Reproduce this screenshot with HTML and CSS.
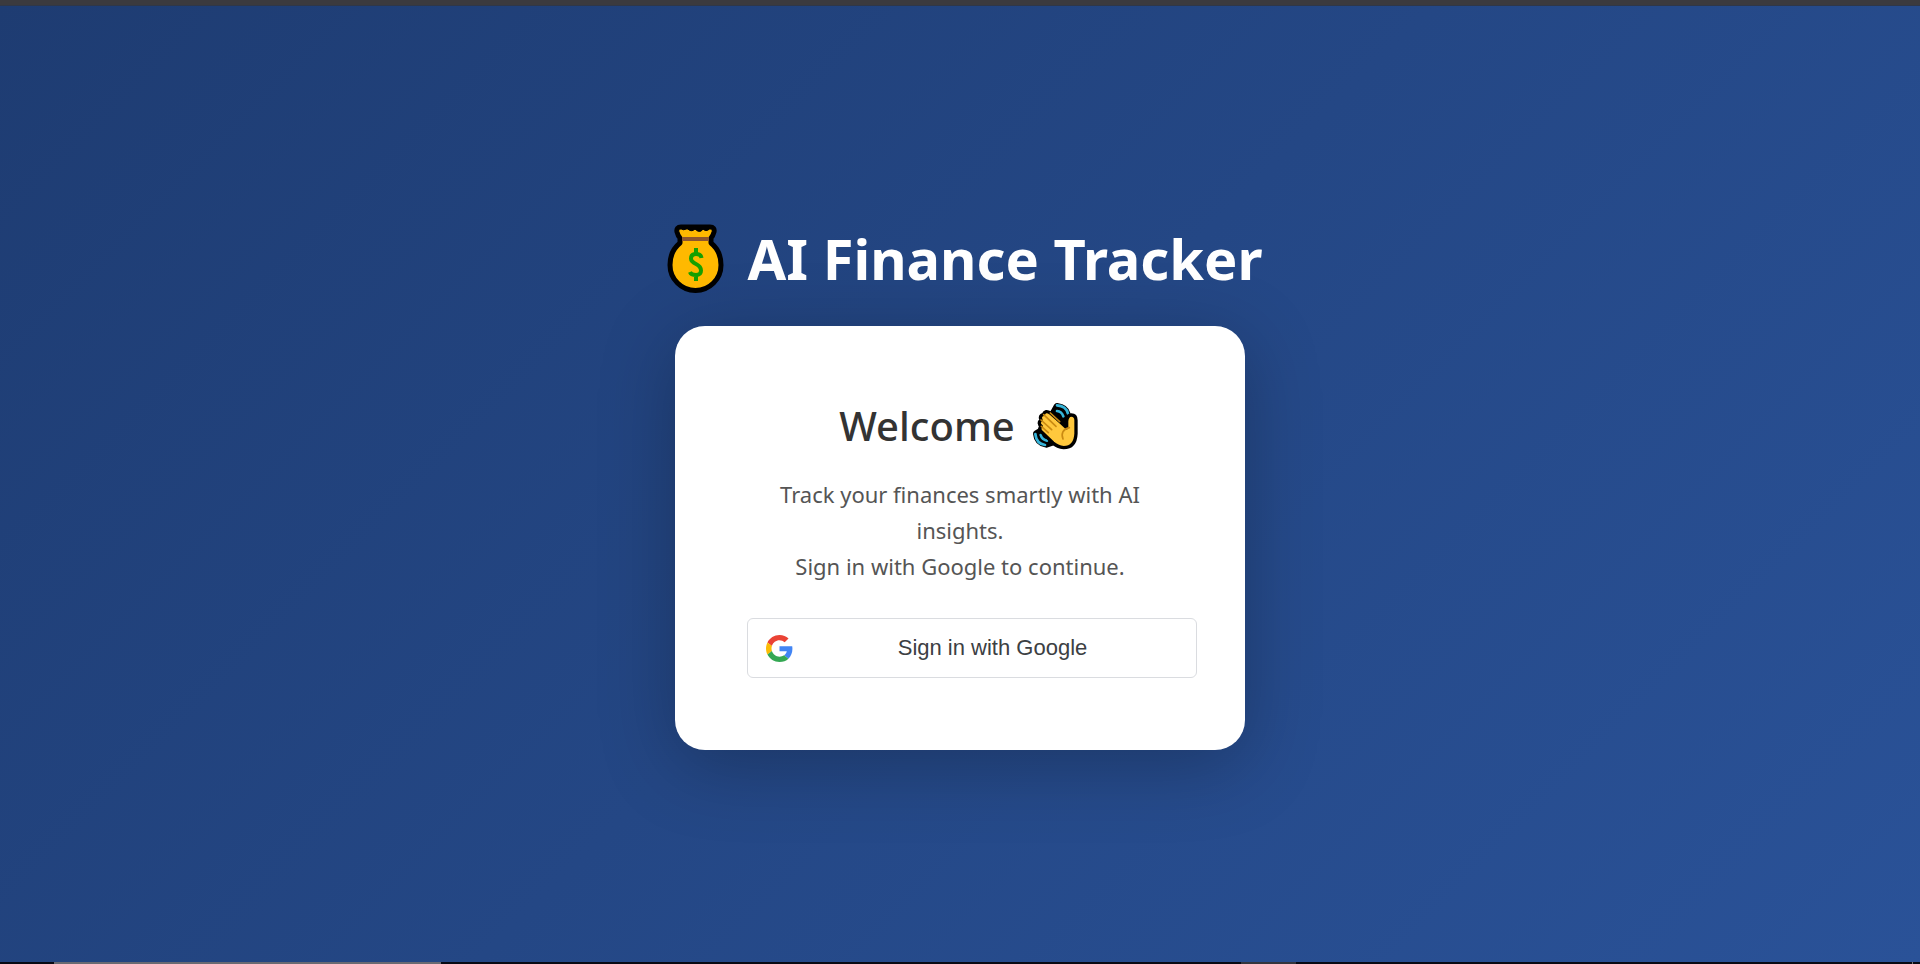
FILE: index.html
```html
<!DOCTYPE html>
<html lang="en">
<head>
<meta charset="utf-8">
<meta name="viewport" content="width=device-width, initial-scale=1">
<title>AI Finance Tracker</title>
<link rel="stylesheet" href="styles.css">
</head>
<body>
<div class="top-edge"></div>
<main class="page">
  <h1 class="title">
    <svg class="bag" viewBox="0 0 80 76" aria-hidden="true">
      <path d="M23 7H52Q57 7 56 12Q55 16 53 18V23Q63 31 63 45A25.500 25.500 0 0 1 12 45Q12 31 22 23V18Q20 16 19 12Q18 7 23 7Z" fill="#ffb900" stroke="#000" stroke-width="5" stroke-linejoin="round"/>
      <path d="M22 7q3 5 7 1q4 5 8 1q5 5 8 0q4 4 8-2z" fill="#000" stroke="#000"/>
      <path d="M24 19H51" stroke="#8e562e" stroke-width="4"/>
      <path d="M43.500 38Q43 34 38 34Q33 34 33 38.500Q33 41.500 38 44Q43 46.500 43 50.500Q43 55 38 55Q33 55 32 52M38 28V34M38 55V61" fill="none" stroke="#16a000" stroke-width="4"/>
    </svg>
    <span>AI Finance Tracker</span>
  </h1>
  <section class="card">
    <h2 class="welcome">
      <span>Welcome</span>
      <svg class="wave" viewBox="18 12 162 162" aria-hidden="true">
        <path d="M108 34Q134 37 139 58L137 92L96 56ZM46 116Q48 142 76 148L94 142L60 108Z" fill="#000" stroke="#000" stroke-width="20" stroke-linejoin="round"/>
        <path d="M108 31Q136 33 141 56M108 48Q122 49 127 64M43 117Q46 146 72 150M59 120Q63 134 78 137" fill="none" stroke="#36b5da" stroke-width="8" stroke-linecap="round"/>
        <path d="M137 98V78Q139 60 151 60Q165 60 165 76V116Q163 158 128 158Q109 156 96 144L60 109Q52 100 61 94Q49 84 60 75Q54 62 67 58Q73 44 88 54L116 79Z" fill="#ffc83d" stroke="#000" stroke-width="10" stroke-linejoin="round"/>
        <path d="M61 94L82 113M60 75L92 104M68 59L105 94M88 54L116 80M145 98Q116 106 126 132" fill="none" stroke="#ca8a12" stroke-width="5" stroke-linecap="round"/>
      </svg>
    </h2>
    <p class="intro">Track your finances smartly with AI insights.<br>Sign in with Google to continue.</p>
    <button class="google" type="button">
      <svg class="logo" viewBox="0 0 48 48" aria-hidden="true">
        <path fill="#ea4335" d="M24 9.500c3.540 0 6.710 1.220 9.210 3.600l6.850-6.850C35.900 2.380 30.470 0 24 0 14.620 0 6.510 5.380 2.560 13.220l7.980 6.190C12.430 13.720 17.740 9.500 24 9.500z"/>
        <path fill="#4285f4" d="M46.980 24.550c0-1.570-.15-3.090-.38-4.550H24v9.020h12.940c-.58 2.960-2.260 5.480-4.780 7.180l7.730 6c4.510-4.180 7.090-10.360 7.090-17.650z"/>
        <path fill="#fbbc05" d="M10.530 28.590c-.48-1.450-.76-2.990-.76-4.590s.27-3.140.76-4.590l-7.980-6.190C.92 16.460 0 20.120 0 24s.92 7.540 2.560 10.780l7.970-6.190z"/>
        <path fill="#34a853" d="M24 48c6.480 0 11.930-2.130 15.890-5.810l-7.730-6c-2.150 1.450-4.920 2.300-8.160 2.300-6.260 0-11.570-4.220-13.470-9.910l-7.980 6.190C6.510 42.620 14.620 48 24 48z"/>
      </svg>
      <span class="google-label">Sign in with Google</span>
    </button>
  </section>
</main>
<div class="bottom-edge"><span class="window"></span><span class="tray"></span><span class="tick"></span></div>
</body>
</html>
```
FILE: styles.css
```css
* { box-sizing: border-box; }

body {
  display: flex;
  flex-direction: column;
  min-height: 100vh;
  margin: 0;
  background: linear-gradient(135deg, #1e3c72, #2a5298);
  font-family: "Segoe UI", "Noto Sans", sans-serif;
}

.top-edge {
  height: 6px;
  background: #3b3a3e;
  border-bottom: 1px solid #2f3748;
}

.page {
  flex: 1;
  display: flex;
  flex-direction: column;
  align-items: center;
  justify-content: center;
  gap: 26px;
  padding-bottom: 2px;
}

.title {
  display: flex;
  align-items: center;
  gap: 10px;
  margin: 0;
  color: #fff;
  font-size: 56px;
  font-weight: 700;
  line-height: 84px;
}

.bag {
  width: 80px;
  height: 76px;
}

.card {
  width: 100%;
  max-width: 570px;
  padding: 72px;
  border-radius: 30px;
  background: #fff;
  box-shadow: 0 15px 75px rgba(0, 0, 0, 0.25);
}

.welcome {
  display: flex;
  align-items: center;
  justify-content: center;
  gap: 12px;
  margin: 0 0 22px;
  color: #333;
  font-size: 40px;
  font-weight: 500;
  line-height: 56px;
}

.wave {
  width: 54px;
  height: 54px;
}

.intro {
  margin: 0 0 34px;
  color: #555;
  font-size: 22px;
  line-height: 36px;
  text-align: center;
}

.google {
  display: flex;
  align-items: center;
  gap: 14px;
  width: 450px;
  height: 60px;
  padding: 0 18px;
  border: 1px solid #dadce0;
  border-radius: 6px;
  background: #fff;
  color: #3c4043;
  font-family: Arial, "Liberation Sans", sans-serif;
  font-size: 22px;
  cursor: pointer;
}

.logo {
  width: 27px;
  height: 27px;
}

.google-label {
  flex: 1;
  text-align: center;
}

.bottom-edge {
  display: grid;
  grid-template-columns: 54fr 387fr 800fr 55fr 616fr 1fr 7fr;
  height: 2px;
  background: #080a14;
}

.window {
  grid-column: 2;
  background: #696a72;
}

.tray {
  grid-column: 4;
  background: #34363e;
}

.tick {
  grid-column: 6;
  background: #777;
}
```
